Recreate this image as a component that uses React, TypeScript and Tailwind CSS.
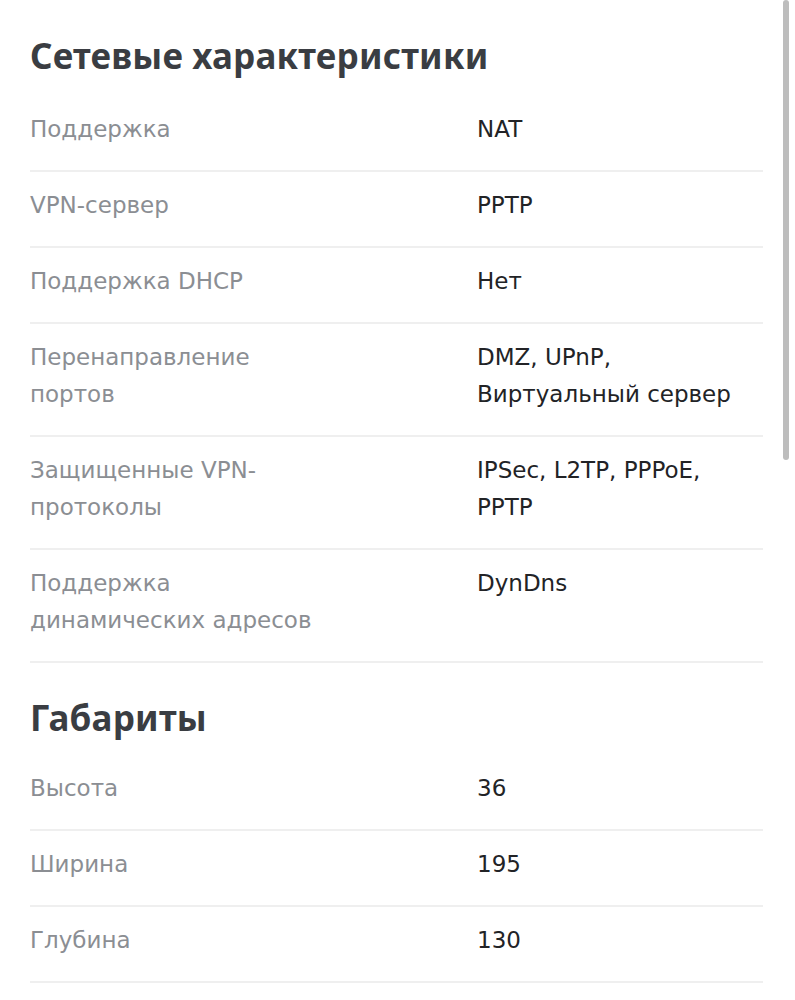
import React from 'react';

const network = [
  { label: 'Поддержка', value: 'NAT' },
  { label: 'VPN-сервер', value: 'PPTP' },
  { label: 'Поддержка DHCP', value: 'Нет' },
  { label: 'Перенаправление портов', value: 'DMZ, UPnP, Виртуальный сервер' },
  { label: 'Защищенные VPN-протоколы', value: 'IPSec, L2TP, PPPoE, PPTP' },
  { label: 'Поддержка динамических адресов', value: 'DynDns' },
];

const size = [
  { label: 'Высота', value: '36' },
  { label: 'Ширина', value: '195' },
  { label: 'Глубина', value: '130' },
];

function Section({
  title,
  rows,
  titleClass,
}: {
  title: string;
  rows: { label: string; value: string }[];
  titleClass: string;
}) {
  return (
    <section>
      <h2
        className={`${titleClass} text-[35px] leading-[74px] font-bold text-[#3a3d42] tracking-[0.2px] font-['Noto_Sans',sans-serif]`}
      >
        {title}
      </h2>
      <div className="flex flex-col">
        {rows.map((r) => (
          <div
            key={r.label}
            className="grid grid-cols-[447px_1fr] pt-[15px] pb-[22px] border-b-2 border-[#efefef] text-[23px] leading-[37px] font-['DejaVu_Sans',sans-serif]"
          >
            <span className="text-[#8b8e93] max-w-[300px]">{r.label}</span>
            <span className="text-[#222326] max-w-[270px]">{r.value}</span>
          </div>
        ))}
      </div>
    </section>
  );
}

export default function App() {
  return (
    <div className="relative min-h-screen bg-white pl-[30px] pr-[32px]">
      <Section title="Сетевые характеристики" rows={network} titleClass="pt-[19px] pb-[3px]" />
      <Section title="Габариты" rows={size} titleClass="pt-[18px]" />

      {/* scrollbar */}
      <div className="absolute top-0 right-[6px] w-[6px] h-[460px] rounded-full bg-[#bdbdbd]" />
    </div>
  );
}
